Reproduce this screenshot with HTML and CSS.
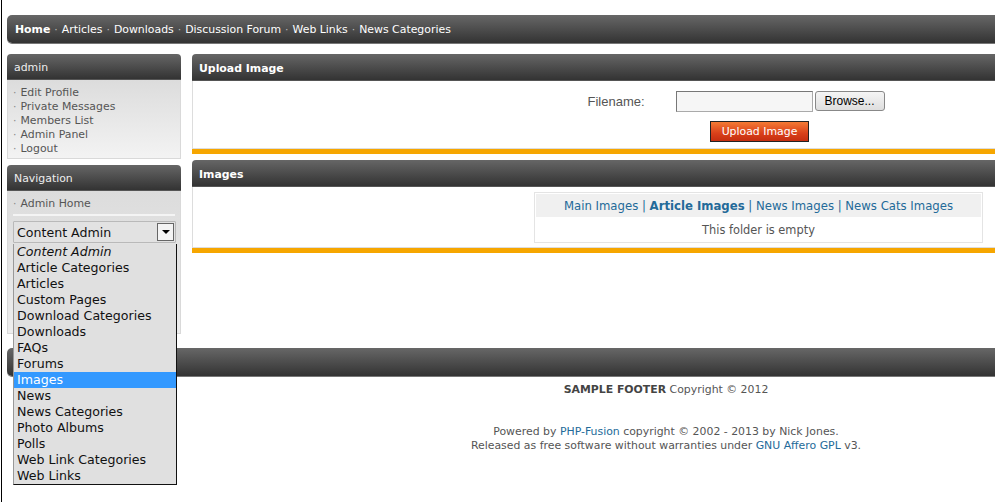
FILE: index.html
```html
<!DOCTYPE html>
<html>
<head>
<meta charset="utf-8">
<title>Image Uploads</title>
<link rel="stylesheet" href="styles.css">
</head>
<body>
<div class="page">
  <div class="navbar">
    <b>Home</b><span class="dot">·</span>Articles<span class="dot">·</span>Downloads<span class="dot">·</span>Discussion Forum<span class="dot">·</span>Web Links<span class="dot">·</span>News Categories
  </div>
  <div class="columns">
    <aside class="side">
      <section class="spanel">
        <div class="cap">admin</div>
        <div class="side-body">
          <ul class="menu">
            <li>Edit Profile</li>
            <li>Private Messages</li>
            <li>Members List</li>
            <li>Admin Panel</li>
            <li>Logout</li>
          </ul>
        </div>
      </section>
      <section class="spanel">
        <div class="cap">Navigation</div>
        <div class="side-body nav-body">
          <ul class="menu">
            <li>Admin Home</li>
          </ul>
          <div class="sep"></div>
          <div class="select">
            <span class="sel-text">Content Admin</span>
            <span class="arrow"></span>
            <ul class="dropdown">
              <li class="group">Content Admin</li>
              <li>Article Categories</li>
              <li>Articles</li>
              <li>Custom Pages</li>
              <li>Download Categories</li>
              <li>Downloads</li>
              <li>FAQs</li>
              <li>Forums</li>
              <li class="hl">Images</li>
              <li>News</li>
              <li>News Categories</li>
              <li>Photo Albums</li>
              <li>Polls</li>
              <li>Web Link Categories</li>
              <li>Web Links</li>
            </ul>
          </div>
        </div>
      </section>
    </aside>
    <main class="main">
      <section class="mpanel">
        <div class="cap cap-main">Upload Image</div>
        <div class="main-body upload-body">
          <div class="form">
            <div class="form-row">
              <span class="label">Filename:</span>
              <span class="file">
                <span class="file-box"></span>
                <span class="browse">Browse...</span>
              </span>
            </div>
            <div class="form-actions">
              <span class="btn">Upload Image</span>
            </div>
          </div>
        </div>
      </section>
      <section class="mpanel">
        <div class="cap cap-main">Images</div>
        <div class="main-body images-body">
          <div class="tbl">
            <div class="tbl-head">
              <a>Main Images</a> | <a class="cur">Article Images</a> | <a>News Images</a> | <a>News Cats Images</a>
            </div>
            <div class="tbl-row">This folder is empty</div>
          </div>
        </div>
      </section>
    </main>
  </div>
  <div class="footbar"></div>
  <div class="footer">
    <div class="foot1"><b>SAMPLE FOOTER</b> Copyright © 2012</div>
    <div class="foot2">Powered by <a>PHP-Fusion</a> copyright © 2002 - 2013 by Nick Jones.<br>Released as free software without warranties under <a>GNU Affero GPL</a> v3.</div>
  </div>
</div>
</body>
</html>
```
FILE: styles.css
```css
html {
  overflow: hidden;
  background: #fff;
}
body {
  margin: 0 0 0 1px;
  border-left: 1px solid #000;
  min-height: 502px;
  font-family: "DejaVu Sans", Verdana, sans-serif;
  font-size: 11px;
  color: #555;
}
ul {
  list-style: none;
  margin: 0;
  padding: 0;
}
a {
  color: #236a99;
  text-decoration: none;
}

.page {
  width: 1318px;
  margin-left: 5px;
  padding-top: 15px;
}

.navbar {
  height: 28px;
  line-height: 30px;
  padding-left: 8px;
  border-radius: 5px 0 0 5px;
  background: linear-gradient(#676767, #333);
  box-shadow: 0 1px 0 #777;
  color: #fff;
  font-size: 10.9px;
  white-space: nowrap;
  overflow: hidden;
}
.navbar .dot {
  color: #bbb;
  padding: 0 4px;
}

.columns {
  display: flex;
  gap: 11px;
  margin-top: 11px;
}
.side {
  width: 174px;
  flex: none;
  display: flex;
  flex-direction: column;
  gap: 6px;
}
.main {
  flex: 1;
  display: flex;
  flex-direction: column;
  gap: 6px;
}

.cap {
  height: 26px;
  line-height: 28px;
  padding-left: 7px;
  border-radius: 4px 4px 0 0;
  background: linear-gradient(#666, #333);
  border-bottom: 1px solid #555;
  box-sizing: border-box;
  color: #eee;
  font-size: 10.9px;
  overflow: hidden;
}
.cap-main {
  border-radius: 4px 0 0 0;
  font-weight: bold;
  color: #fff;
  height: 27px;
  line-height: 30px;
}

.side-body {
  border: 1px solid #d9d9d9;
  border-top: none;
  background: linear-gradient(#dcdcdc, #f3f3f3);
  padding: 6px 5px 1px 5px;
  height: 79px;
  box-sizing: border-box;
}
.menu li {
  line-height: 14px;
  color: #555;
  font-size: 10.9px;
}
.menu li::before {
  content: "·";
  color: #888;
  margin-right: 4px;
}
.nav-body {
  height: 143px;
  padding-top: 6px;
  background: linear-gradient(#dcdcdc, #e6e6e6 60%, #eee);
}
.sep {
  height: 2px;
  background: #f4f4f4;
  margin: 3px 0 5px 0;
}

.select {
  position: relative;
  height: 20px;
  border: 1px solid #b9b9b9;
  border-radius: 1px;
  background: #e2e2e2;
  display: flex;
  align-items: center;
  font-size: 12.6px;
  color: #111;
  margin-right: -1px;
}
.sel-text {
  flex: 1;
  padding-left: 3px;
}
.arrow {
  width: 15px;
  height: 16px;
  margin-right: 1px;
  border: 1px solid #666;
  background: #f4f4f4;
  position: relative;
}
.arrow::after {
  content: "";
  position: absolute;
  left: 4px;
  top: 6px;
  border-left: 4px solid transparent;
  border-right: 4px solid transparent;
  border-top: 4px solid #000;
}
.dropdown {
  position: absolute;
  left: -1px;
  top: 22px;
  width: 162px;
  background: #e0e0e0;
  border-left: 1px solid #999;
  border-right: 1px solid #111;
  border-bottom: 1px solid #111;
  z-index: 5;
}
.dropdown li {
  height: 16px;
  line-height: 16px;
  padding-left: 3px;
  font-size: 12.6px;
  color: #111;
  white-space: nowrap;
}
.dropdown .group {
  font-style: italic;
}
.dropdown .hl {
  background: #3399ff;
  color: #fff;
}

.mpanel {
  border-bottom: 5px solid #f6a600;
}
.main-body {
  background: #fff;
  border: 1px solid #ddd;
  border-top: none;
}
.upload-body {
  height: 68px;
  box-sizing: border-box;
  display: flex;
  justify-content: center;
  padding-top: 10px;
}
.form {
  width: 350px;
  display: flex;
  flex-direction: column;
  align-items: center;
  gap: 9px;
}
.form-row {
  width: 100%;
  display: flex;
  align-items: center;
  font-family: "Liberation Sans", Arial, sans-serif;
}
.label {
  width: 92px;
  flex: none;
  padding-left: 4px;
  box-sizing: border-box;
  font-size: 13px;
  color: #555;
}
.file {
  display: flex;
  align-items: flex-start;
  gap: 2px;
}
.file-box {
  width: 135px;
  height: 19px;
  border: 1px solid #aaa;
  border-top-color: #777;
  border-left-color: #777;
  background: #f6f6f6;
}
.browse {
  width: 68px;
  height: 18px;
  line-height: 18px;
  text-align: center;
  border: 1px solid #888;
  border-radius: 3px;
  background: linear-gradient(#f5f5f5, #dedede);
  font-size: 12px;
  color: #000;
}
.form-actions {
  display: flex;
  justify-content: center;
}
.btn {
  display: block;
  width: 97px;
  height: 19px;
  line-height: 20px;
  text-align: center;
  border: 1px solid #222;
  background: linear-gradient(#f47a34, #d9401a 60%, #c52e10);
  color: #fff;
  font-size: 10.9px;
  margin-left: 2px;
}

.images-body {
  height: 61px;
  box-sizing: border-box;
  display: flex;
  justify-content: center;
  padding-top: 5px;
}
.tbl {
  width: 449px;
  height: 51px;
  box-sizing: border-box;
  border: 1px solid #e4e4e4;
  padding: 1px;
  text-align: center;
  font-size: 11.4px;
}
.tbl-head {
  background: #f0f0f0;
  height: 23px;
  line-height: 24px;
  color: #236a99;
  font-size: 11.7px;
}
.tbl-head .cur {
  font-weight: bold;
}
.tbl-row {
  line-height: 26px;
  color: #555;
}

.footbar {
  height: 28px;
  margin-top: 14px;
  border-radius: 5px 0 0 5px;
  background: linear-gradient(#676767, #333);
  box-shadow: 0 1px 0 #777;
}
.footer {
  text-align: center;
  font-size: 10.9px;
  color: #555;
}
.footer b {
  color: #444;
}
.foot1 {
  margin-top: 7px;
  line-height: 14px;
}
.foot2 {
  margin-top: 28px;
  line-height: 14px;
}
```
